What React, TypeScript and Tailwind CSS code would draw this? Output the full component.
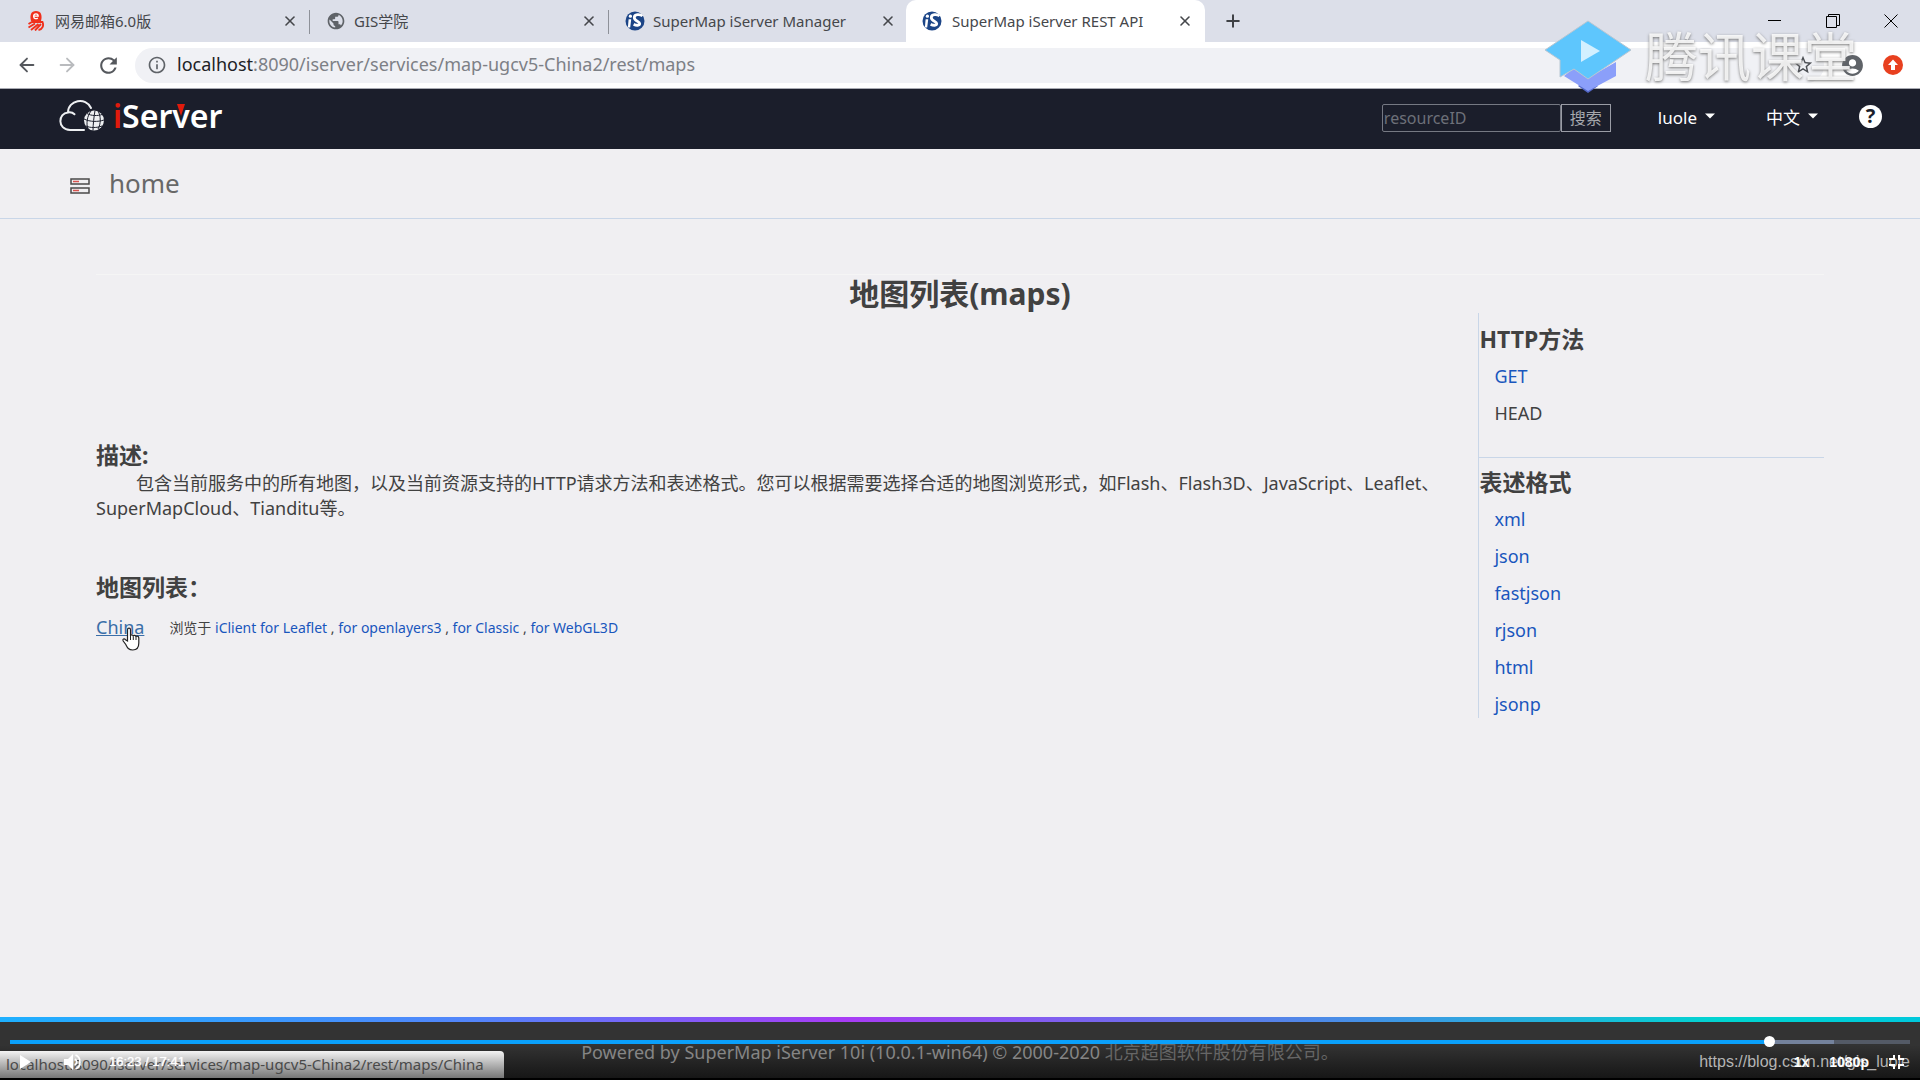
import React from "react";
import { ArrowLeft, ArrowRight, X, Plus } from "lucide-react";
import { MdPublic, MdInfoOutline, MdStarBorder, MdAccountCircle, MdRefresh } from "react-icons/md";

const ISFavicon = () => (
  <svg viewBox="0 0 20 20" className="size-5 shrink-0" aria-hidden="true">
    <circle cx="10" cy="10" r="9.5" fill="#1c4587" />
    <path d="M3.6 8.2h2.6l-1 8.300H2.900z" fill="#fff" />
    <circle cx="5.400" cy="5.200" r="1.600" fill="#fff" />
    <path d="M17.500 5C15 3 9.300 3 9.300 6.600c0 4 5.400 3.300 5.400 6 0 2-3.400 2.200-6 .6" fill="none" stroke="#fff" strokeWidth="2.800" />
  </svg>
);

const MailFavicon = () => (
  <svg viewBox="0 0 18 20" className="h-5 w-[18px] shrink-0" fill="none" stroke="#f0301c" aria-hidden="true">
    <path d="M9 0C4 0 2.500 4 4 10h10c1.500-6 0-10-5-10z" fill="#f0301c" stroke="none" />
    <path d="M6.600 5.200h4.600C11.200 2 6.800 2 6.600 5.200c0 2.600 2.700 3 4.200 1.700" stroke="#fff" strokeWidth="1.300" />
    <path d="M1.500 13l3.500-2h10.500c1.500 3.500 0 7.500-4 8M1.500 16.500l6.500-4M4 19l7.500-6M8 19.500l6-6.500" strokeWidth="1.900" />
  </svg>
);

const CloudLogo = () => (
  <svg viewBox="0 0 46 34" className="h-[34px] w-[46px] shrink-0" fill="none" aria-hidden="true">
    <path d="M25 31H11C-2 30.500-1 14 9 13.500 9 1 27-2.500 32 9M9 13.500c3-.5 5 .3 6.500 1.800" stroke="#eef0f2" strokeWidth="2" strokeLinecap="round" />
    <circle cx="35" cy="21.500" r="10" fill="#eef0f2" />
    <g stroke="#1b1e2b" strokeWidth="1">
      <path d="M25 20c6 3 14 3 20 1M28 14.500c4 2.500 11 2.500 15 1M27 27c4 2 11 2 16 0M36 11.500c-1 6-2 14-2 20" />
      <path d="M32 12c-4 5-5 13-3 18M39 12c3 5 3 13 0 18" />
    </g>
  </svg>
);

const ServerIcon = () => (
  <svg viewBox="0 0 20 16" className="mt-1 h-4 w-5 shrink-0" fill="none" aria-hidden="true">
    <path d="M1 1h18v5H1zM1 10h18v5H1z" stroke="#4a4a4a" strokeWidth="1.500" />
    <path d="M3 3.500h6M3 12.500h6" stroke="#d9534f" strokeWidth="1.300" />
  </svg>
);

const Caret = () => (
  <svg viewBox="0 0 10 6" className="mb-1 h-1.5 w-2.5" aria-hidden="true">
    <path d="M0 .5h10L5 5.500z" fill="#fff" />
  </svg>
);

const HandCursor = () => (
  <svg viewBox="0 0 18 24" className="h-6 w-[18px]" aria-hidden="true">
    <path
      d="M5.500 14V2.800c0-2.200 3-2.200 3 0V9c0-1.700 2.800-1.500 2.800.4 0-1.500 2.700-1.300 2.700.6 0-1.400 2.800-1.200 2.800 1v5c0 4-2 7-6 7-4.500 0-5.500-2.500-7-5.500L1.200 14c-1-2 1-2.800 2.300-1.300z"
      fill="#fff" stroke="#222" strokeWidth="1.200"
    />
    <path d="M8.500 9v4M11.300 9.500V13M14 10v3" stroke="#222" strokeWidth="1" />
  </svg>
);

type TabProps = { icon: React.ReactNode; label: string; active?: boolean; divider?: boolean };

const Tab = ({ icon, label, active, divider }: TabProps) => (
  <div
    role="tab"
    aria-selected={!!active}
    className={
      "relative flex h-[42px] w-[299px] shrink-0 items-center pl-4 pr-3 text-[15px] text-[#45474b] " +
      (active ? "-ml-0.5 rounded-t-[10px] bg-white " : "") +
      (divider ? "after:absolute after:right-0 after:top-2.5 after:h-6 after:w-px after:bg-[#8e9199]" : "")
    }
  >
    <span className={active ? "flex w-[30px] items-center" : "flex w-7 items-center"}>{icon}</span>
    <span className="flex-1 truncate">{label}</span>
    <button type="button" aria-label={"关闭 " + label} className="flex size-4 items-center justify-center">
      <X size={16} strokeWidth={2.4} />
    </button>
  </div>
);

const BrowserChrome = () => (
  <div className="shrink-0">
    <div className="flex h-[42px] items-center bg-[#dcdfe9]">
      <div className="flex flex-1 items-center pl-[11px]" role="tablist">
        <Tab icon={<MailFavicon />} label="网易邮箱6.0版" divider />
        <Tab icon={<MdPublic size={20} color="#5f6368" />} label="GIS学院" divider />
        <Tab icon={<ISFavicon />} label="SuperMap iServer Manager" />
        <Tab icon={<ISFavicon />} label="SuperMap iServer REST API" active />
        <button type="button" aria-label="新标签页" className="ml-[18px] text-[#3f4145]">
          <Plus size={20} strokeWidth={2.4} />
        </button>
      </div>
      <div className="flex h-9 items-center gap-11 pr-[22px] text-black">
        <button type="button" aria-label="最小化">
          <svg width="14" height="14" viewBox="0 0 14 14"><path d="M0 6.500h13" stroke="currentColor" /></svg>
        </button>
        <button type="button" aria-label="还原">
          <svg width="14" height="14" viewBox="0 0 14 14" fill="none" stroke="currentColor"><path d="M.5 2.500h10v11H.5zM2.500 2.500v-2h11v11h-3" /></svg>
        </button>
        <button type="button" aria-label="关闭窗口">
          <svg width="14" height="14" viewBox="0 0 14 14"><path d="M.5.5l13 13M13.500.5l-13 13" stroke="currentColor" /></svg>
        </button>
      </div>
    </div>
    <div className="flex h-[47px] items-center border-b border-[#a9abb3] bg-white pl-4 pr-[17px]">
      <div className="flex items-center gap-[18px] text-[#55585d]">
        <button type="button" aria-label="后退"><ArrowLeft size={22} strokeWidth={2} /></button>
        <button type="button" aria-label="前进" className="text-[#b9bbbe]"><ArrowRight size={22} strokeWidth={2} /></button>
        <button type="button" aria-label="重新加载"><MdRefresh size={25} /></button>
      </div>
      <div className="ml-3.5 flex h-[35px] flex-1 items-center rounded-full bg-[#f0f1f5] pl-3">
        <MdInfoOutline size={20} color="#5f6368" className="shrink-0" />
        <div className="ml-2.5 flex-1 pb-0.5 text-[18px] leading-6 text-[#7d8086]">
          <span className="text-[#202124]">localhost</span>:8090/iserver/services/map-ugcv5-China2/rest/maps
        </div>
        <button type="button" aria-label="收藏" className="mr-2.5 text-[#4c4f54]"><MdStarBorder size={22} /></button>
      </div>
      <button type="button" aria-label="用户" className="ml-4 text-[#5f6368]"><MdAccountCircle size={25} /></button>
      <button type="button" aria-label="更新" className="ml-[18px]">
        <svg width="20" height="20" viewBox="0 0 20 20"><circle cx="10" cy="10" r="10" fill="#e8401f" /><path d="M10 4.500l5 5.500h-3v5H8v-5H5z" fill="#fff" /></svg>
      </button>
    </div>
  </div>
);

const SiteHeader = () => (
  <header className="flex h-[60px] shrink-0 items-center justify-between bg-[#1b1e2b] pb-0.5 pl-[59px] pr-[38px] text-white">
    <a href="#" className="flex items-center gap-2 pb-1">
      <CloudLogo />
      <span className="text-[32px] leading-8 font-semibold">
        <span className="text-[#e01a0c]">i</span>Ser
        <span className="relative inline-block">
          v
          <svg viewBox="0 0 8 12" className="absolute left-1/2 top-1 h-3 w-2 -translate-x-1/2" aria-hidden="true">
            <path d="M0 0h8L4 12z" fill="#e01a0c" />
          </svg>
        </span>
        er
      </span>
    </a>
    <div className="flex items-center text-[17px]">
      <form className="flex items-center" onSubmit={(e) => e.preventDefault()}>
        <input
          type="text"
          aria-label="resourceID"
          placeholder="resourceID"
          className="h-7 w-[179px] rounded-[2px] border border-[#767983] bg-transparent px-px text-[16px] placeholder:text-[#6d7079]"
        />
        <button type="submit" className="h-7 w-[50px] border border-[#9a9ca5] text-[16px] leading-6 text-[#a6a8ad]">搜索</button>
      </form>
      <button type="button" className="ml-[47px] flex items-center gap-2">luole <Caret /></button>
      <button type="button" className="ml-[51px] flex items-center gap-2">中文 <Caret /></button>
      <button type="button" aria-label="帮助" className="ml-[41px] mb-1 flex size-[23px] items-center justify-center rounded-full bg-white text-[20px] leading-none font-bold text-[#1b1e2b]">?</button>
    </div>
  </header>
);

const formats = ["xml", "json", "fastjson", "rjson", "html", "jsonp"];

const Sidebar = () => (
  <aside className="w-1/5 border-l border-[#c9d6e8]">
    <section className="border-b border-[#c9d6e8] pt-2.5 pb-[30px]">
      <h2 className="text-[23px] leading-8 font-bold">HTTP方法</h2>
      <ul className="mt-2 flex flex-col gap-2.5 pl-[15px] text-[18px] leading-[27px]">
        <li><a href="#" className="text-[#1956bd]">GET</a></li>
        <li>HEAD</li>
      </ul>
    </section>
    <section className="pt-2">
      <h2 className="text-[23px] leading-8 font-bold">表述格式</h2>
      <ul className="mt-2 flex flex-col gap-2.5 pl-[15px] text-[18px] leading-[27px]">
        {formats.map((f) => (
          <li key={f}><a href="#" className="text-[#1956bd]">{f}</a></li>
        ))}
      </ul>
    </section>
  </aside>
);

const viewers = ["iClient for Leaflet", "for openlayers3", "for Classic", "for WebGL3D"];

const MapsPage = () => (
  <main className="flex-1 px-[5%] pt-[55px]">
    <div className="border-t border-[#f5f5f5]">
      <h1 className="text-center text-[30px] leading-[38px] font-bold">地图列表(maps)</h1>
      <div className="flex">
        <div className="w-4/5 pt-[126px]">
          <h2 className="text-[23px] leading-8 font-bold">描述:</h2>
          <p className="indent-10 text-[18px] leading-[25px]">
            包含当前服务中的所有地图，以及当前资源支持的HTTP请求方法和表述格式。您可以根据需要选择合适的地图浏览形式，如Flash、Flash3D、JavaScript、Leaflet、SuperMapCloud、Tianditu等。
          </p>
          <h2 className="mt-[50px] text-[23px] leading-8 font-bold">地图列表：</h2>
          <div className="mt-2.5 flex items-center text-[14px] leading-7">
            <span className="relative">
              <a href="#" className="text-[18px] text-[#3a6ea8] underline">China</a>
              <span className="pointer-events-none absolute left-[26px] top-3.5"><HandCursor /></span>
            </span>
            <span className="ml-[25px]">
              浏览于{" "}
              {viewers.map((v, i) => (
                <React.Fragment key={v}>
                  {i > 0 && " , "}
                  <a href="#" className="text-[#1956bd]">{v}</a>
                </React.Fragment>
              ))}
            </span>
          </div>
        </div>
        <Sidebar />
      </div>
    </div>
  </main>
);

const Player = () => (
  <div className="absolute inset-x-0 bottom-0 flex h-10 flex-col border-b-2 border-black text-white">
    <div className="relative mx-2.5 h-1 bg-[#545a66]">
      <div className="absolute inset-y-0 left-0 w-[96%] bg-[#74829c]" />
      <div className="absolute inset-y-0 left-0 w-[92.6%] bg-[#0aa0fb]" />
      <span className="absolute -top-1 left-[92.3%] size-[11px] rounded-full bg-white" />
    </div>
    <div className="flex flex-1 items-center pl-5 pr-4 pt-0.5 font-['Liberation_Sans'] text-[13px]">
      <button type="button" aria-label="播放">
        <svg width="11" height="14" viewBox="0 0 11 14"><path d="M0 0l11 7-11 7z" fill="#fff" /></svg>
      </button>
      <button type="button" aria-label="音量" className="ml-8">
        <svg width="19" height="18" viewBox="0 0 19 18" fill="none"><path d="M1 6h4l5-5v16l-5-5H1z" fill="#fff" /><path d="M12 6c2 1.500 2 4.500 0 6M12.500 2c6 2.500 6 11.500 0 14" stroke="#fff" strokeWidth="1.800" /></svg>
      </button>
      <span className="ml-[27px] flex-1 [text-shadow:0_0_1px_#fff]">16:23 / 17:41</span>
      <button type="button" className="text-[14px] font-bold">1x</button>
      <button type="button" className="ml-5 text-[14px] font-bold">1080p</button>
      <button type="button" aria-label="退出全屏" className="ml-5">
        <svg width="15" height="14" viewBox="0 0 15 14" fill="none" stroke="#fff" strokeWidth="2"><path d="M5 0v4H0M10 0v4h5M5 14v-4H0M10 14v-4h5" /></svg>
      </button>
    </div>
  </div>
);

const Watermark = () => (
  <div className="pointer-events-none absolute right-[63px] top-5 flex items-center gap-[13px]">
    <svg width="88" height="74" viewBox="0 0 88 74" aria-hidden="true">
      <path d="M34 66l10-8 10 8-10 7z" fill="#5468c8" />
      <path d="M20 56l10-8 14 10 28-16v14L44 71z" fill="#8b9ffa" />
      <path d="M44 1l43 29-43 29-14-10-14 8V40L1 30z" fill="#5ec6fd" stroke="#b9c6d2" strokeWidth="1" />
      <path d="M37 20l19 11-19 11z" fill="#d3f0ff" />
    </svg>
    <span className="text-[53px] leading-[74px] text-white/85 [text-shadow:0_1px_3px_#777]">腾讯课堂</span>
  </div>
);

export default function App() {
  return (
    <div className="relative flex min-h-screen flex-col overflow-hidden bg-[#f0eff2] font-['Noto_Sans','Noto_Sans_CJK_SC',sans-serif] text-[#414141]">
      <BrowserChrome />
      <SiteHeader />
      <nav className="flex h-[70px] shrink-0 items-center border-b border-[#c9d6e8] pl-[70px]">
        <ServerIcon />
        <a href="#" className="ml-[19px] pb-0.5 text-[26px] leading-8 text-[#686868]">home</a>
      </nav>
      <MapsPage />
      <div className="h-[5px] shrink-0 bg-[linear-gradient(90deg,#1eb0ff,#5484fa_25%,#a83cf5_44%,#4591e6_71%,#00d5d0_90%,#00c8dc)]" />
      <footer className="h-[58px] shrink-0 bg-linear-to-b from-[#333] from-40% to-[#151515] pt-4 text-center text-[18px] leading-7 text-[#858585]">
        Powered by SuperMap iServer 10i (10.0.1-win64) © 2000-2020 <span className="text-[#666]">北京超图软件股份有限公司。</span>
      </footer>
      <div className="absolute bottom-0.5 left-0 h-[27px] rounded-tr bg-linear-to-b from-[#f4f4f4] to-[#777] pl-1.5 pr-5 text-[15px] leading-[26px] text-[#4a4a4a]">
        localhost:8090/iserver/services/map-ugcv5-China2/rest/maps/China
      </div>
      <div className="absolute bottom-1.5 right-2.5 font-['Liberation_Sans'] text-[16px] leading-6 text-[#b4b4b4]">https://blog.csdn.net/gis_luole</div>
      <Player />
      <Watermark />
    </div>
  );
}
